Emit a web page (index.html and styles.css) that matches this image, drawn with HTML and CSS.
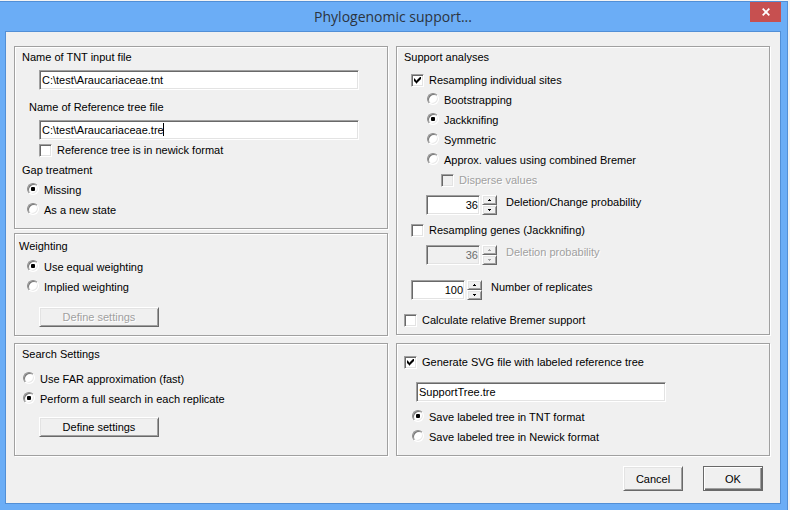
FILE: index.html
```html
<!DOCTYPE html>
<html lang="en">
<head>
<meta charset="utf-8">
<title>Phylogenomic support...</title>
<link rel="stylesheet" href="styles.css">
</head>
<body>
<main class="window">
  <header class="titlebar">
    <h1 class="title">Phylogenomic support...</h1>
    <button class="close" type="button" aria-label="Close">
      <svg width="8" height="8" viewBox="0 0 8 8" aria-hidden="true"><path d="M0.7 0.7L7.3 7.3M7.3 0.7L0.7 7.3" stroke="#fff" stroke-width="1.8"/></svg>
    </button>
  </header>
  <form class="client">
    <div class="columns">
      <div class="column">
        <section class="panel files">
          <label class="row" for="tnt">Name of TNT input file</label>
          <input class="field gap-s" id="tnt" type="text" value="C:\test\Araucariaceae.tnt">
          <label class="row reference-label" for="ref">Name of Reference tree file</label>
          <div class="field-wrap gap-s">
            <input class="field" id="ref" type="text" value="C:\test\Araucariaceae.tre">
            <span class="caret"></span>
          </div>
          <label class="row indent-l"><input type="checkbox">Reference tree is in newick format</label>
          <div class="row">Gap treatment</div>
          <label class="row indent-m"><input type="radio" name="gap" checked>Missing</label>
          <label class="row indent-m"><input type="radio" name="gap">As a new state</label>
        </section>
        <section class="panel weighting">
          <div class="row">Weighting</div>
          <label class="row indent-m"><input type="radio" name="weight" checked>Use equal weighting</label>
          <label class="row indent-m"><input type="radio" name="weight">Implied weighting</label>
          <button class="button define" type="button" disabled>Define settings</button>
        </section>
        <section class="panel search">
          <div class="row">Search Settings</div>
          <label class="row indent-s gap-m"><input type="radio" name="search">Use FAR approximation (fast)</label>
          <label class="row indent-s"><input type="radio" name="search" checked>Perform a full search in each replicate</label>
          <button class="button define" type="button">Define settings</button>
        </section>
      </div>
      <div class="column right">
        <section class="panel support">
          <div class="row">Support analyses</div>
          <label class="row level-1 gap-s"><input type="checkbox" checked>Resampling individual sites</label>
          <label class="row level-2"><input type="radio" name="method">Bootstrapping</label>
          <label class="row level-2"><input type="radio" name="method" checked>Jackknifing</label>
          <label class="row level-2"><input type="radio" name="method">Symmetric</label>
          <label class="row level-2"><input type="radio" name="method">Approx. values using combined Bremer</label>
          <label class="row level-3 disabled"><input type="checkbox" disabled>Disperse values</label>
          <div class="spin-row level-2 gap-m">
            <input class="number" id="change" type="number" value="36">
            <span class="spinner">
              <button type="button" aria-label="Increase"><svg width="3" height="2" viewBox="0 0 3 2"><path d="M1 0h1v1h1v1H0V1h1z"/></svg></button>
              <button type="button" aria-label="Decrease"><svg width="3" height="2" viewBox="0 0 3 2"><path d="M0 0h3v1H2v1H1V1H0z"/></svg></button>
            </span>
            <label for="change">Deletion/Change probability</label>
          </div>
          <label class="row level-1 gap-m"><input type="checkbox">Resampling genes (Jackknifing)</label>
          <div class="spin-row level-2 gap-m disabled">
            <input class="number" id="deletion" type="number" value="36" disabled>
            <span class="spinner">
              <button type="button" aria-label="Increase" disabled><svg width="3" height="2" viewBox="0 0 3 2"><path d="M1 0h1v1h1v1H0V1h1z"/></svg></button>
              <button type="button" aria-label="Decrease" disabled><svg width="3" height="2" viewBox="0 0 3 2"><path d="M0 0h3v1H2v1H1V1H0z"/></svg></button>
            </span>
            <label for="deletion">Deletion probability</label>
          </div>
          <div class="spin-row level-1 replicates">
            <input class="number" id="replicates" type="number" value="100">
            <span class="spinner">
              <button type="button" aria-label="Increase"><svg width="3" height="2" viewBox="0 0 3 2"><path d="M1 0h1v1h1v1H0V1h1z"/></svg></button>
              <button type="button" aria-label="Decrease"><svg width="3" height="2" viewBox="0 0 3 2"><path d="M0 0h3v1H2v1H1V1H0z"/></svg></button>
            </span>
            <label for="replicates">Number of replicates</label>
          </div>
          <label class="row gap-l"><input type="checkbox">Calculate relative Bremer support</label>
        </section>
        <section class="panel output">
          <label class="row"><input type="checkbox" checked>Generate SVG file with labeled reference tree</label>
          <input class="field output-name gap-l" type="text" aria-label="Labeled tree file name" value="SupportTree.tre">
          <label class="row level-1 gap-m"><input type="radio" name="format" checked>Save labeled tree in TNT format</label>
          <label class="row level-1"><input type="radio" name="format">Save labeled tree in Newick format</label>
        </section>
      </div>
    </div>
    <footer class="actions">
      <button class="button" type="button">Cancel</button>
      <button class="button default" type="submit">OK</button>
    </footer>
  </form>
</main>
</body>
</html>
```
FILE: styles.css
```css
* {
  box-sizing: border-box;
}

body {
  margin: 0;
  padding: 1px 2px 0 0;
  min-height: 100vh;
  display: flex;
  background: #f4f4f4;
  color: #000;
  font: 11px/20px "Liberation Sans", Arial, sans-serif;
}

input,
button {
  margin: 0;
  font: inherit;
  color: inherit;
}

.window {
  flex: 1;
  display: flex;
  flex-direction: column;
  padding: 0 6px 6px 5px;
  background: #6badf6;
  border: solid #528fd6;
  border-width: 1px 1px 0 0;
}

.titlebar {
  position: relative;
  height: 29px;
}

.title {
  margin: 0;
  text-align: center;
  font: 14px/29px "Open Sans", "Noto Sans", sans-serif;
  color: #2b3440;
}

.close {
  position: absolute;
  top: 0;
  right: 0;
  width: 31px;
  height: 20px;
  padding: 0;
  border: 0;
  background: #c75050;
  display: grid;
  place-items: center;
}

.client {
  flex: 1;
  padding: 14px 10px 12px 8px;
  background: #f0f0f0;
  border: 1px solid #528fd6;
}

.columns {
  display: grid;
  grid-template-columns: 1fr 1fr;
  gap: 8px;
}

.column {
  display: flex;
  flex-direction: column;
  justify-content: space-between;
}

.panel {
  border: 1px solid #a0a0a0;
  box-shadow: 1px 1px #fff, inset 1px 1px #fff;
  padding: 0 7px 8px;
}

.weighting {
  padding: 2px 4px 8px;
  margin: 4px 0 7px;
}

.search {
  padding-bottom: 18px;
}

.support {
  padding-bottom: 4px;
}

.output {
  padding-top: 8px;
}

.row {
  display: flex;
  align-items: center;
  gap: 5px;
  height: 20px;
  white-space: nowrap;
}

.reference-label {
  margin: 7px 0 0 7px;
}

.gap-s { margin-top: 3px; }
.gap-m { margin-top: 5px; }
.gap-l { margin-top: 10px; }

.indent-s { padding-left: 1px; }
.indent-m { padding-left: 5px; }
.indent-l { padding-left: 17px; }
.weighting .indent-m { padding-left: 8px; }

.level-1 { padding-left: 7px; }
.level-2 { padding-left: 22px; }
.level-3 { padding-left: 37px; }
.row.level-2 { padding-left: 23px; }
.output .level-1 { padding-left: 8px; }

.field,
.number,
input[type="checkbox"] {
  border: 1px solid;
  border-color: #a0a0a0 #fff #fff #a0a0a0;
  border-radius: 0;
  background: #fff;
  box-shadow: inset 1px 1px #696969, inset -1px -1px #e3e3e3;
  outline: 0;
}

.field {
  display: block;
  width: 320px;
  max-width: 90%;
  height: 20px;
  margin-left: 17px;
  padding: 0 2px;
}

.field-wrap {
  position: relative;
  width: 320px;
  max-width: 90%;
  margin-left: 17px;
}

.field-wrap .field {
  width: 100%;
  max-width: none;
  margin-left: 0;
}

.caret {
  position: absolute;
  left: 124px;
  top: 3px;
  width: 1px;
  height: 13px;
  background: #000;
}

.output-name {
  width: 250px;
  margin-left: 12px;
}

input[type="checkbox"] {
  appearance: none;
  flex: none;
  width: 13px;
  height: 13px;
  display: grid;
  place-items: center;
}

input[type="checkbox"]:checked::after {
  content: "";
  width: 7px;
  height: 7px;
  background: #000;
  clip-path: polygon(0 2px, 1px 2px, 1px 3px, 2px 3px, 2px 4px, 3px 4px, 3px 3px, 4px 3px, 4px 2px, 5px 2px, 5px 1px, 6px 1px, 6px 0, 7px 0, 7px 3px, 6px 3px, 6px 4px, 5px 4px, 5px 5px, 4px 5px, 4px 6px, 3px 6px, 3px 7px, 2px 7px, 2px 6px, 1px 6px, 1px 5px, 0 5px);
}

input[type="radio"] {
  appearance: none;
  flex: none;
  width: 12px;
  height: 12px;
  margin-bottom: 2px;
  border: 1px solid;
  border-color: #8c8c8c #fff #fff #8c8c8c;
  border-radius: 50%;
  background: #fff;
  box-shadow: inset 1px 1px #777, inset -1px -1px #e9e9e9;
  display: grid;
  place-items: center;
}

input[type="radio"]:checked::after {
  content: "";
  width: 4px;
  height: 4px;
  border-radius: 1px;
  background: #000;
}

.disabled,
.button:disabled {
  color: #a0a0a0;
  text-shadow: 1px 1px #fff;
}

.number:disabled,
input[type="checkbox"]:disabled {
  background: #f0f0f0;
}

.number:disabled {
  color: #6d6d6d;
  text-shadow: none;
}

.spin-row {
  display: flex;
  gap: 2px;
}

.spin-row label {
  margin-left: 7px;
  line-height: 15px;
}

.replicates {
  margin-top: 15px;
}

.number {
  appearance: textfield;
  width: 54px;
  height: 20px;
  padding: 0 1px;
  text-align: right;
}

.number::-webkit-inner-spin-button {
  display: none;
}

.spinner {
  display: flex;
  flex-direction: column;
  width: 15px;
}

.button,
.spinner button {
  border: 1px solid;
  border-color: #fff #696969 #696969 #fff;
  border-radius: 0;
  background: #f0f0f0;
  box-shadow: inset 1px 1px #e3e3e3, inset -1px -1px #a0a0a0;
}

.spinner button {
  height: 10px;
  padding: 0;
  display: grid;
  place-items: center;
}

.spinner button:disabled {
  fill: #a0a0a0;
}

.define {
  display: block;
  width: 120px;
  height: 20px;
  margin: 8px 0 0 17px;
  padding: 0;
  line-height: 18px;
}

.weighting .define {
  margin: 10px 0 0 20px;
}

.weighting .row:first-child {
  margin-bottom: 1px;
}

.actions {
  display: flex;
  justify-content: flex-end;
  gap: 20px;
  padding: 10px 7px 0 0;
}

.actions .button {
  width: 60px;
  height: 25px;
  padding: 0;
}

.actions .default {
  border-color: #696969;
  box-shadow: inset 1px 1px #fff, inset -1px -1px #696969, inset -2px -2px #a0a0a0;
}
```
